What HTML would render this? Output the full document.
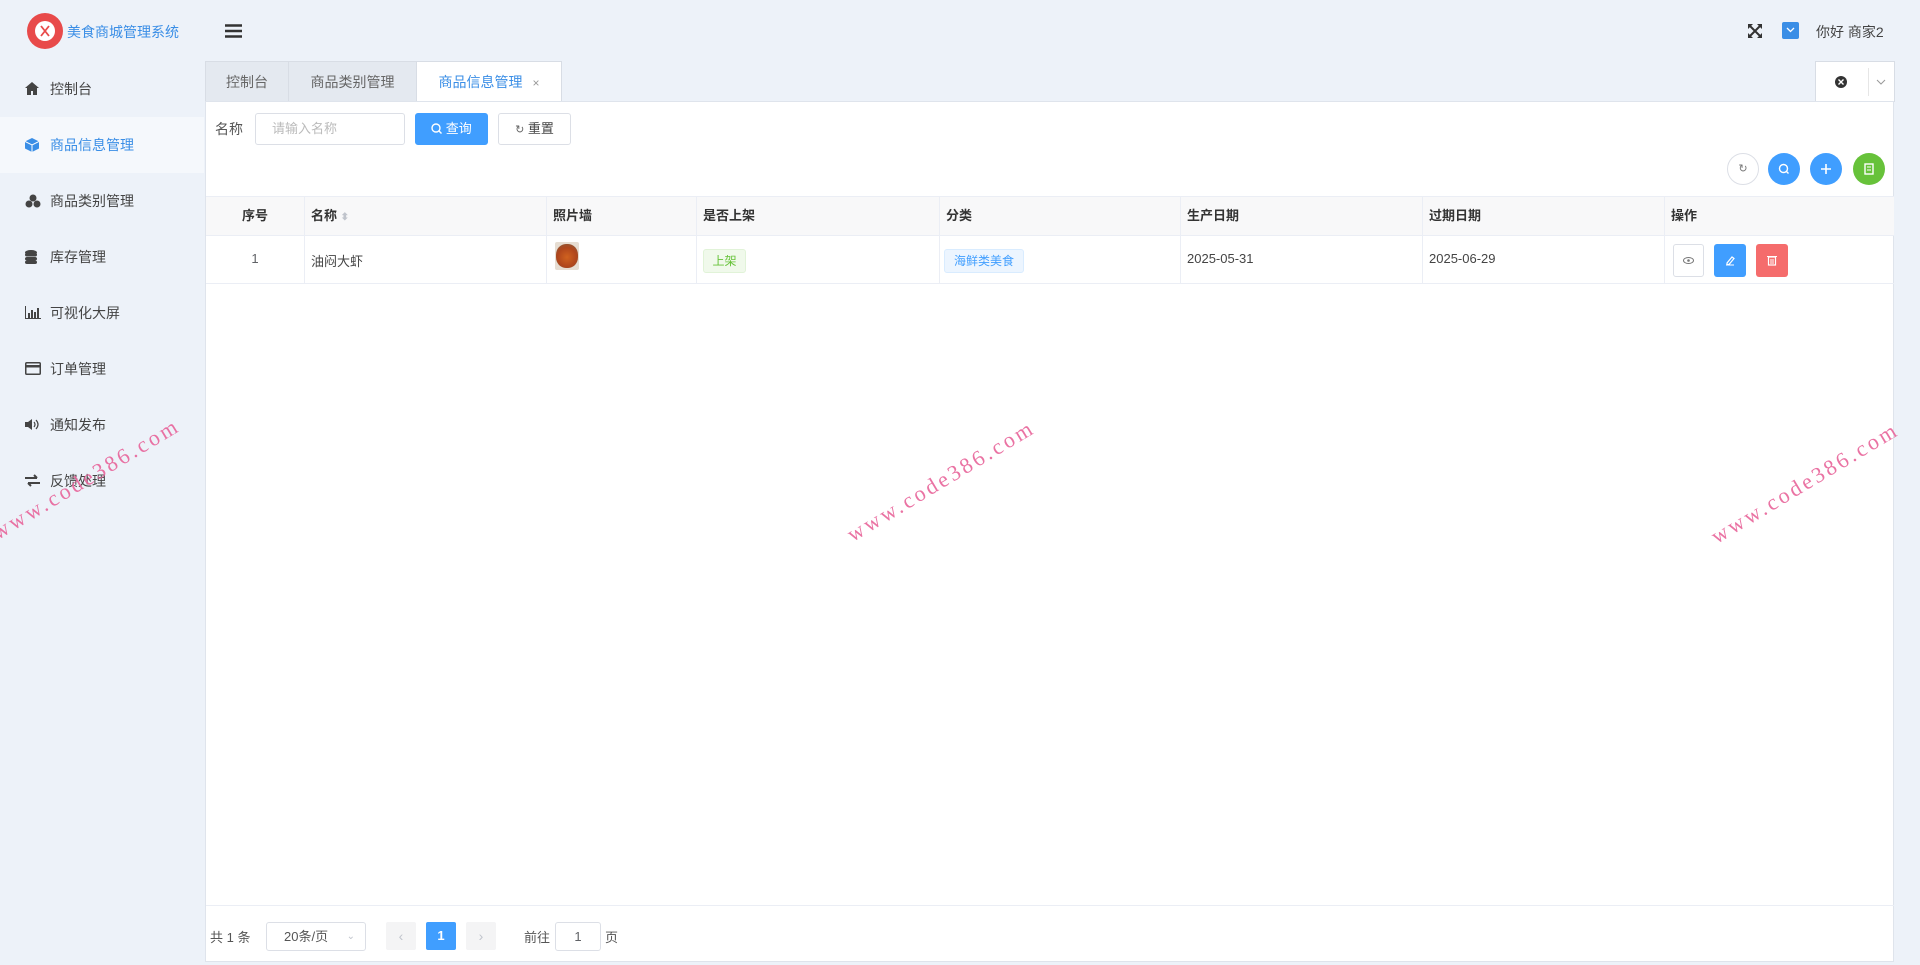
<!DOCTYPE html>
<html><head><meta charset="utf-8"><style>
*{box-sizing:border-box;margin:0;padding:0}
body{width:1920px;height:965px;background:#edf2f9;font-family:"Liberation Sans","Noto Sans CJK SC",sans-serif;font-size:14px;color:#606266;position:relative;overflow:hidden}
.a{position:absolute}
.side{left:0;top:61px;width:204px;height:904px}
.mi{position:absolute;left:0;width:204px;height:56px;line-height:56px;padding-left:50px;font-size:14px;color:#444}
.mi svg{position:absolute;left:25px;top:21px}
.mi.act{background:#f5f8fc;color:#3a8ee6}
.tab{top:61px;height:40px;line-height:40px;text-align:center;font-size:14px;color:#666;background:#e4e9f0;border:1px solid #d8dde5;border-bottom:none}
.panel{left:205px;top:101px;width:1689px;height:861px;background:#fff;border:1px solid #dfe4ec}
.btn{height:32px;line-height:30px;border-radius:3px;font-size:13px;text-align:center}
.th{top:197px;height:38px;line-height:38px;font-weight:bold;font-size:13px;color:#333;background:#f8f8f9}
.cb{width:32px;height:32px;border-radius:50%;top:153px}
.wm{font-family:"Liberation Serif",serif;font-size:22px;color:#e8649a;letter-spacing:3px;transform:rotate(-31deg);white-space:nowrap;width:240px;text-align:center;opacity:.9}
</style></head><body>
<div class="a" style="left:27px;top:13px;width:36px;height:36px;border-radius:50%;background:#e84a4a"></div>
<div class="a" style="left:35px;top:21px;width:20px;height:20px;border-radius:50%;background:#fff"></div>
<svg class="a" style="left:37px;top:23px" width="16" height="16" viewBox="0 0 16 16"><path d="M4 3L12 13M12 3L4 13" stroke="#e84a4a" stroke-width="1.8"/></svg>
<div class="a" style="left:67px;top:22px;font-size:14px;color:#3a8ee6">美食商城管理系统</div>
<svg class="a" style="left:225px;top:24px" width="17" height="14"><path d="M0 1.5h17M0 7h17M0 12.5h17" stroke="#333" stroke-width="2.4"/></svg>
<svg class="a" style="left:1748px;top:24px" width="14" height="14" viewBox="0 0 14 14"><path d="M1 1l12 12M13 1L1 13" stroke="#333" stroke-width="2"/><path d="M0 0h5L0 5zM14 0h-5l5 5zM0 14h5l-5-5zM14 14h-5l5-5z" fill="#333"/></svg>
<div class="a" style="left:1782px;top:22px;width:17px;height:17px;background:#3a8ee6;border-radius:2px"></div>
<svg class="a" style="left:1786px;top:27px" width="9" height="6"><path d="M1 1l3.5 3.5L8 1" stroke="#fff" fill="none" stroke-width="1.3"/></svg>
<div class="a" style="left:1816px;top:22px;font-size:14px;color:#444">你好 商家2</div>
<div class="a side">
<div class="mi" style="top:0"><svg width="14" height="13"><path d="M7 0L0 6h2v7h4V9h2v4h4V6h2z" fill="#444"/></svg>控制台</div>
<div class="mi act" style="top:56px"><svg width="14" height="14"><path d="M7 0L14 3.5V10.5L7 14L0 10.5V3.5z" fill="#3a8ee6"/><path d="M0 3.5L7 7L14 3.5M7 7v7" stroke="#fff" fill="none"/></svg>商品信息管理</div>
<div class="mi" style="top:112px"><svg width="16" height="14"><circle cx="8" cy="4" r="3.5" fill="#444"/><circle cx="4" cy="10" r="3.5" fill="#444"/><circle cx="12" cy="10" r="3.5" fill="#444"/></svg>商品类别管理</div>
<div class="mi" style="top:168px"><svg width="12" height="14"><ellipse cx="6" cy="2.5" rx="6" ry="2.5" fill="#444"/><rect y="3" width="12" height="3.5" rx="2" fill="#444"/><rect y="7" width="12" height="3.5" rx="2" fill="#444"/><rect y="10.5" width="12" height="3.5" rx="2" fill="#444"/></svg>库存管理</div>
<div class="mi" style="top:224px"><svg width="16" height="13"><path d="M.5 0v12.5H16" stroke="#444" fill="none"/><path d="M3 7h2v5H3zM6 4h2v8H6zM9 6h2v6H9zM12 2h2v10h-2z" fill="#444"/></svg>可视化大屏</div>
<div class="mi" style="top:280px"><svg width="16" height="13"><rect x=".75" y=".75" width="14.5" height="11.5" rx="1" stroke="#444" fill="none" stroke-width="1.5"/><rect x="1" y="3" width="14" height="2.5" fill="#444"/></svg>订单管理</div>
<div class="mi" style="top:336px"><svg width="15" height="13"><path d="M0 4h3l4-3v11l-4-3H0z" fill="#444"/><path d="M9 4q2 2.5 0 5M11 2q4 4.5 0 9" stroke="#444" fill="none" stroke-width="1.2"/></svg>通知发布</div>
<div class="mi" style="top:392px"><svg width="15" height="13"><path d="M0 4h12M9 1l3 3M15 9H3M6 12L3 9" stroke="#444" fill="none" stroke-width="2"/></svg>反馈处理</div>
</div>
<div class="a tab" style="left:205px;width:84px">控制台</div>
<div class="a tab" style="left:288px;width:129px">商品类别管理</div>
<div class="a tab" style="left:416px;width:146px;background:#fff;color:#3a8ee6;height:41px">商品信息管理 <span style="color:#999;font-size:12px;margin-left:6px">×</span></div>
<div class="a" style="left:1815px;top:61px;width:80px;height:41px;background:#fff;border:1px solid #d8dde5;border-bottom:none"></div>
<div class="a" style="left:1835px;top:76px;width:12px;height:12px;border-radius:50%;background:#333"></div>
<svg class="a" style="left:1838px;top:79px" width="6" height="6"><path d="M.5 .5l5 5M5.5 .5l-5 5" stroke="#fff" stroke-width="1.4"/></svg>
<div class="a" style="left:1868px;top:68px;width:1px;height:28px;background:#e6e6e6"></div>
<svg class="a" style="left:1876px;top:79px" width="10" height="6"><path d="M1 1l4 4 4-4" stroke="#999" fill="none"/></svg>
<div class="a panel"></div>
<div class="a" style="left:215px;top:119px;font-size:14px;color:#555">名称</div>
<div class="a" style="left:255px;top:113px;width:150px;height:32px;border:1px solid #dcdfe6;border-radius:3px;padding-left:16px;line-height:30px;font-size:13px;color:#bbb">请输入名称</div>
<div class="a btn" style="left:415px;top:113px;width:73px;background:#409eff;color:#fff;border:1px solid #409eff"><svg width="11" height="11" style="vertical-align:-1px"><circle cx="5" cy="5" r="4" stroke="#fff" fill="none" stroke-width="1.4"/><path d="M8 8l2.5 2.5" stroke="#fff" stroke-width="1.4"/></svg> 查询</div>
<div class="a btn" style="left:498px;top:113px;width:73px;background:#fff;color:#444;border:1px solid #dcdfe6"><span style="font-size:11px;color:#666">↻</span> 重置</div>
<div class="a cb" style="left:1727px;border:1px solid #dcdfe6;background:#fff;text-align:center;line-height:30px;font-size:11px;color:#777">↻</div>
<div class="a cb" style="left:1768px;background:#409eff"><svg width="32" height="32"><circle cx="15.5" cy="15.5" r="4" stroke="#fff" fill="none" stroke-width="1.4"/><path d="M18.5 18.5l2 2" stroke="#fff" stroke-width="1.4"/></svg></div>
<div class="a cb" style="left:1810px;background:#409eff"><svg width="32" height="32"><path d="M16 11v10M11 16h10" stroke="#fff" stroke-width="1.6"/></svg></div>
<div class="a cb" style="left:1853px;background:#67c23a"><svg width="32" height="32"><rect x="12" y="11" width="8" height="10" stroke="#fff" fill="none" stroke-width="1.4"/><path d="M14 14h4M14 17h4" stroke="#fff"/></svg></div>
<div class="a" style="left:206px;top:196px;width:1688px;height:1px;background:#ebeef5"></div>
<div class="a th" style="left:206px;width:1688px"></div>
<div class="a" style="left:206px;top:235px;width:1688px;height:1px;background:#ebeef5"></div>
<div class="a" style="left:206px;top:283px;width:1688px;height:1px;background:#ebeef5"></div>
<div class="a" style="left:304px;top:197px;width:1px;height:86px;background:#ebeef5"></div>
<div class="a" style="left:546px;top:197px;width:1px;height:86px;background:#ebeef5"></div>
<div class="a" style="left:696px;top:197px;width:1px;height:86px;background:#ebeef5"></div>
<div class="a" style="left:939px;top:197px;width:1px;height:86px;background:#ebeef5"></div>
<div class="a" style="left:1180px;top:197px;width:1px;height:86px;background:#ebeef5"></div>
<div class="a" style="left:1422px;top:197px;width:1px;height:86px;background:#ebeef5"></div>
<div class="a" style="left:1664px;top:197px;width:1px;height:86px;background:#ebeef5"></div>
<div class="a th" style="left:206px;width:98px;text-align:center;background:none">序号</div>
<div class="a th" style="left:311px;background:none">名称 <span style="color:#c0c4cc;font-size:10px">⬍</span></div>
<div class="a th" style="left:553px;background:none">照片墙</div>
<div class="a th" style="left:703px;background:none">是否上架</div>
<div class="a th" style="left:946px;background:none">分类</div>
<div class="a th" style="left:1187px;background:none">生产日期</div>
<div class="a th" style="left:1429px;background:none">过期日期</div>
<div class="a th" style="left:1671px;background:none">操作</div>
<div class="a" style="left:206px;top:251px;width:98px;text-align:center;font-size:13px">1</div>
<div class="a" style="left:311px;top:251px;font-size:13px;color:#444">油闷大虾</div>
<div class="a" style="left:555px;top:242px;width:24px;height:28px;border-radius:2px;background:#e6ddd2"></div>
<div class="a" style="left:556px;top:244px;width:22px;height:24px;border-radius:45%;background:radial-gradient(circle at 50% 55%,#d0621f 0,#b0461c 55%,#8a5a3a 90%)"></div>
<div class="a" style="left:703px;top:249px;width:43px;height:24px;line-height:22px;text-align:center;background:#f0f9eb;border:1px solid #e1f3d8;border-radius:3px;font-size:12px;color:#67c23a">上架</div>
<div class="a" style="left:944px;top:249px;width:80px;height:24px;line-height:22px;text-align:center;background:#ecf5ff;border:1px solid #d9ecff;border-radius:3px;font-size:12px;color:#409eff">海鲜类美食</div>
<div class="a" style="left:1187px;top:251px;font-size:13px;color:#444">2025-05-31</div>
<div class="a" style="left:1429px;top:251px;font-size:13px;color:#444">2025-06-29</div>
<div class="a" style="left:1673px;top:244px;width:31px;height:33px;border:1px solid #dcdfe6;border-radius:3px;background:#fff"><svg width="29" height="31"><ellipse cx="14.5" cy="15.5" rx="5" ry="3" stroke="#777" fill="none"/><circle cx="14.5" cy="15.5" r="1.3" fill="#777"/></svg></div>
<div class="a" style="left:1714px;top:244px;width:32px;height:33px;border-radius:3px;background:#409eff"><svg width="32" height="33"><path d="M13 19l5-6 2 1.5-5 6h-2z" stroke="#fff" fill="none" stroke-width="1.2"/><path d="M12 21h8" stroke="#fff"/></svg></div>
<div class="a" style="left:1756px;top:244px;width:32px;height:33px;border-radius:3px;background:#f56c6c"><svg width="32" height="33"><rect x="12.5" y="13" width="7" height="8" stroke="#fff" fill="none" stroke-width="1.2"/><path d="M11 12.5h10M15 15v5M17 15v5" stroke="#fff"/></svg></div>
<div class="a" style="left:206px;top:905px;width:1688px;height:1px;background:#ebeef5"></div>
<div class="a" style="left:210px;top:927px;font-size:13px;color:#555">共 1 条</div>
<div class="a" style="left:266px;top:922px;width:100px;height:29px;border:1px solid #dcdfe6;border-radius:3px;line-height:27px;padding-left:17px;font-size:13px;color:#555">20条/页<span style="position:absolute;right:10px;color:#c0c4cc;font-size:10px">⌄</span></div>
<div class="a" style="left:386px;top:922px;width:30px;height:28px;background:#f4f4f5;border-radius:2px;text-align:center;line-height:28px;color:#c0c4cc">‹</div>
<div class="a" style="left:426px;top:922px;width:30px;height:28px;background:#409eff;border-radius:2px;text-align:center;line-height:28px;color:#fff;font-weight:bold;font-size:13px">1</div>
<div class="a" style="left:466px;top:922px;width:30px;height:28px;background:#f4f4f5;border-radius:2px;text-align:center;line-height:28px;color:#c0c4cc">›</div>
<div class="a" style="left:524px;top:927px;font-size:13px;color:#555">前往</div>
<div class="a" style="left:555px;top:922px;width:46px;height:29px;border:1px solid #dcdfe6;border-radius:3px;text-align:center;line-height:27px;font-size:13px">1</div>
<div class="a" style="left:605px;top:927px;font-size:13px;color:#555">页</div>
<div class="a wm" style="left:-34px;top:466px">www.code386.com</div>
<div class="a wm" style="left:821px;top:468px">www.code386.com</div>
<div class="a wm" style="left:1685px;top:470px">www.code386.com</div>
</body></html>
